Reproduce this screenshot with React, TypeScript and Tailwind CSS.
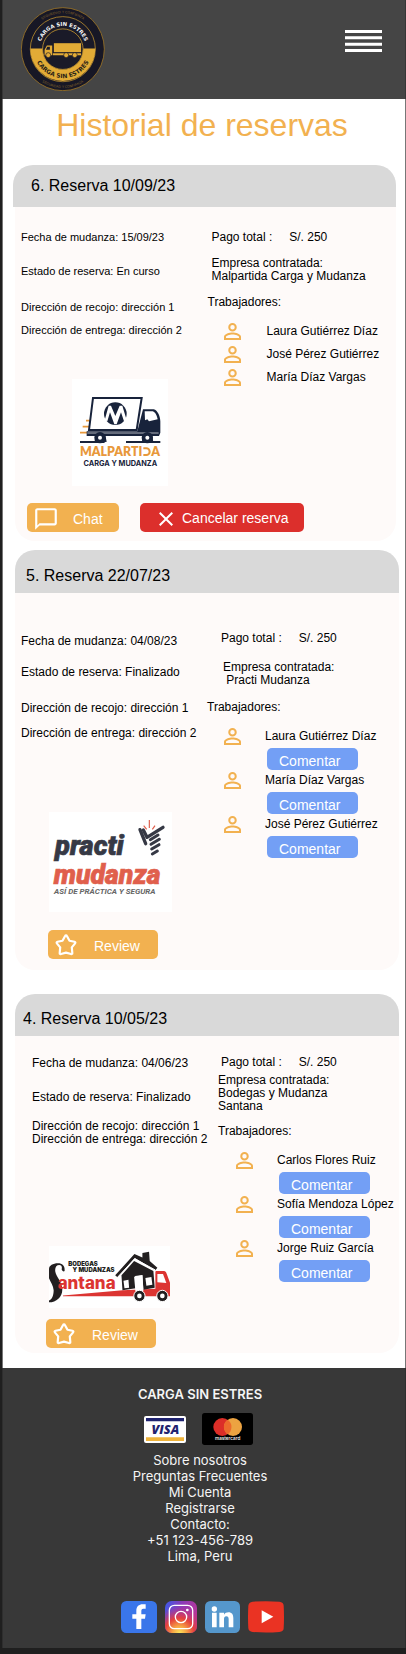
import type { ReactNode } from "react";
import { MdChatBubbleOutline, MdClose } from "react-icons/md";

function BrandLogo() {
  return (
    <svg viewBox="62 20 253 253" className="size-[84px]" role="img" aria-label="Carga sin estres">
      <defs>
        <path id="arc-top" d="M118 147a70 70 0 0 1 140 0" />
        <path id="arc-bottom" d="M101 147a87 87 0 0 0 174 0" />
        <path id="rim-top" d="M80 147a108 108 0 0 1 216 0" />
        <path id="rim-bottom" d="M71 147a117 117 0 0 0 234 0" />
      </defs>
      <circle cx="188" cy="147" r="125" fill="#171725" stroke="#9c7425" strokeWidth="2.5" />
      <circle cx="188" cy="147" r="98" fill="#1a1a28" stroke="#b58a2e" strokeWidth="2.5" />
      <path d="M90 145h196a98 98 0 0 1-196 0z" fill="#e2ab36" />
      <circle cx="188" cy="147" r="61" fill="#1a1a28" stroke="#c0922f" strokeWidth="2.5" />
      <g fontFamily="DejaVu Sans, sans-serif" textAnchor="middle">
        <text fontSize="16" fontWeight="700" fill="#f4f4f4">
          <textPath href="#arc-top" startOffset="50%">CARGA SIN ESTRES</textPath>
        </text>
        <text fontSize="18" fontWeight="700" fill="#2a2418">
          <textPath href="#arc-bottom" startOffset="50%">CARGA SIN ESTRES</textPath>
        </text>
        <text fontSize="10" fill="#80602a">
          <textPath href="#rim-top" startOffset="50%">SEGURIDAD Y CONFIANZA</textPath>
        </text>
        <text fontSize="10" fill="#80602a">
          <textPath href="#rim-bottom" startOffset="50%">SEGURIDAD Y CONFIANZA</textPath>
        </text>
      </g>
      <g fill="#e2ab36">
        <path d="M161 129h82v27h-82z" />
        <path d="M140 136h16v29h-23v-16zM158 159h85v6h-85z" />
        <path d="M141 140h8v9h-12z" fill="#1a1a28" />
        <g stroke="#1a1a28" strokeWidth="2">
          <circle cx="144" cy="165" r="7.500" />
          <circle cx="198" cy="165" r="7.500" />
          <circle cx="224" cy="165" r="7.500" />
        </g>
      </g>
    </svg>
  );
}

function MalpartidaLogo() {
  return (
    <svg viewBox="6 -18 288 321" className="h-[107px] w-24" role="img" aria-label="Malpartida Carga y Mudanza">
      <path d="M6-18h288v321H6z" fill="#fff" />
      <path d="M48 107h12M38 125h20M30 143h24" stroke="#e8983a" strokeWidth="5" />
      <path d="M69 39h146l-15 96H57z" fill="#fff" stroke="#18233b" strokeWidth="6" />
      <path d="M219 73h32c12 3 20 21 20 36v34l-4 10H50v-14h152z" fill="#18233b" />
      <path d="M224 79h24c9 3 13 14 15 24l-26 6-5-6-7 3z" fill="#fff" />
      <path d="M52 144h214" stroke="#fff" strokeWidth="2" />
      <path d="M30 168h80l-8 6H30zM168 168h103v6H168z" fill="#18233b" />
      <path d="M76 150h30l4 20H74zM218 150h28l4 20h-34z" fill="#18233b" />
      <circle cx="90" cy="158" r="17" fill="#18233b" />
      <circle cx="90" cy="158" r="6" fill="#fff" />
      <circle cx="232" cy="158" r="17" fill="#18233b" />
      <circle cx="232" cy="158" r="6" fill="#fff" />
      <circle cx="136" cy="86" r="34" fill="#18233b" />
      <path d="M104 106l12-44h7l13 31 13-31h8l13 43-8 4-9-27-13 36h-7l-13-36-8 27z" fill="#fff" />
      <text x="217" y="213" textAnchor="end" fontFamily="Lato, sans-serif" fontSize="37" fontWeight="800" fill="#e8983a">MALPARTI</text>
      <path d="M220 190h9a10 10 0 0 1 0 20h-9" fill="none" stroke="#e8983a" strokeWidth="6" />
      <text x="244" y="213" fontFamily="Lato, sans-serif" fontSize="37" fontWeight="800" fill="#e8983a">A</text>
      <text x="151" y="242" textAnchor="middle" fontFamily="Inter, sans-serif" fontSize="22" fontWeight="700" fill="#18233b">CARGA Y MUDANZA</text>
    </svg>
  );
}

function PractiLogo() {
  return (
    <svg viewBox="148 66 369 300" className="h-[100px] w-[123px]" role="img" aria-label="Practi Mudanza">
      <path d="M148 66h369v300H148z" fill="#fff" />
      <g fontFamily="Roboto, sans-serif" fontStyle="italic">
        <text x="166" y="194" fontSize="82" fontWeight="900" fill="#363945" stroke="#363945" strokeWidth="2">practi</text>
        <text x="162" y="281" fontSize="80" fontWeight="900" fill="#e05f4c" stroke="#e05f4c" strokeWidth="2">mudanza</text>
        <text x="163" y="312" fontSize="24" fontWeight="700" fill="#666">ASÍ DE PRÁCTICA Y SEGURA</text>
      </g>
      <g stroke="#363945" strokeLinecap="round" fill="none">
        <path d="M421 119l17 42" strokeWidth="10" />
        <path d="M431 120l11 22M442 142l48-30" strokeWidth="10" />
        <path d="M452 149l23-14M454 163l25-15M456 177l22-13M458 192l15-9" strokeWidth="9" />
      </g>
      <path d="M449 90v24M432 107l9 11M466 107l-8 11" stroke="#e05f4c" strokeWidth="3.500" />
    </svg>
  );
}

function SantanaLogo() {
  return (
    <svg viewBox="148 290 364 186" className="h-[62px] w-[121px]" role="img" aria-label="Bodegas y Mudanzas Santana">
      <path d="M148 290h364v186H148z" fill="#fff" />
      <path d="M195 364c1-13-6-22-20-22-15 0-27 7-27 17v28c5 12 13 22 14 36 0 15-5 28-14 31v5c22 0 40-16 40-38 0-24-18-38-21-54-2-12 3-20 12-20 7 0 9 6 7 13 1 6 8 8 9 4z" fill="#221f20" />
      <g fontFamily="Inter, sans-serif" fontWeight="900" fill="#221f20" fontSize="18">
        <text x="206" y="351">BODEGAS</text>
        <text x="219" y="368">Y MUDANZAS</text>
      </g>
      <path d="M190 439l180-16 98-5v-50c0-2 2-3 4-3h22c4 0 6 3 8 8l10 27v41H190z" fill="#dc3532" />
      <path d="M474 374h17l10 27-27-2z" fill="#fff" />
      <text x="174" y="418" fontFamily="Inter, sans-serif" fontSize="51" fontWeight="800" fill="#dc3532">antana</text>
      <path d="M347 378l58-64 24 10v-13l20-4 2 28 23 20-6 8-62-37-52 58z" fill="#221f20" />
      <path d="M366 378l38-43 58 30 4 50-34 6-3-44-22 3 2 37-40 6z" fill="#221f20" />
      <path d="M354 384l52-56 62 34" fill="none" stroke="#fff" strokeWidth="3" />
      <path d="M372 394l15-3 2 24-14 2zM438 386l18-3 3 23-18 3zM404 382l25-4 3 48-24 1z" fill="#fff" />
      <g fill="#221f20" stroke="#fff" strokeWidth="3">
        <circle cx="420" cy="440" r="17" />
        <circle cx="489" cy="440" r="17" />
      </g>
      <g fill="#fff">
        <circle cx="420" cy="440" r="7" />
        <circle cx="489" cy="440" r="7" />
      </g>
    </svg>
  );
}

function PersonIcon() {
  return (
    <svg viewBox="4 4 16 16" className="size-[17px] shrink-0" fill="#f2b150" aria-hidden="true">
      <path d="M12 5.900a2.100 2.100 0 1 1 0 4.200 2.100 2.100 0 0 1 0-4.200m0 9c2.970 0 6.100 1.460 6.100 2.100v1.100H5.900V17c0-.640 3.130-2.100 6.100-2.100M12 4C9.790 4 8 5.790 8 8s1.790 4 4 4 4-1.790 4-4-1.790-4-4-4m0 9c-2.670 0-8 1.340-8 4v3h16v-3c0-2.660-5.330-4-8-4" />
    </svg>
  );
}

function StarIcon() {
  return (
    <svg viewBox="0 0 24 24" className="size-6 shrink-0" fill="none" stroke="#fff" strokeWidth="2.2" strokeLinejoin="round" aria-hidden="true">
      <path d="M11.100 3a1 1 0 0 1 1.800 0l2.600 4.700 5 1.100c.9.200 1.100 1 .6 1.600l-3.300 4 .5 5.600c.1.900-.6 1.300-1.300 1L12 19.600l-5 1.400c-.8.300-1.400-.1-1.300-1l.5-5.600-3.300-4c-.5-.6-.3-1.400.6-1.600l5-1.100z" />
    </svg>
  );
}

function Worker({ name }: { name: string }) {
  return (
    <li className="flex h-[23px] items-start gap-[26px]">
      <PersonIcon />
      <span className="pt-0.5 whitespace-nowrap">{name}</span>
    </li>
  );
}

function RatedWorker({ name }: { name: string }) {
  return (
    <li className="flex items-start gap-6">
      <PersonIcon />
      <div className="flex flex-col items-start gap-[5px] pt-0.5">
        <span className="whitespace-nowrap">{name}</span>
        <button type="button" className="ml-0.5 h-[22px] w-[91px] rounded-[5px] bg-[#739ff5] pt-[3px] pl-3 text-left text-sm leading-[18px] text-white">
          Comentar
        </button>
      </div>
    </li>
  );
}

function ReviewButton() {
  return (
    <button type="button" className="flex h-[29px] w-[110px] items-center gap-4 rounded-[5px] bg-[#f2b150] pl-1.5 text-sm text-white">
      <StarIcon />
      <span className="pt-0.5">Review</span>
    </button>
  );
}

function Total() {
  return (
    <p className="flex gap-[17px]">
      <span>Pago total :</span>
      <span>S/. 250</span>
    </p>
  );
}

function Card({ title, headClass, children }: { title: string; headClass: string; children: ReactNode }) {
  return (
    <section>
      <h2 className={"rounded-t-[20px] bg-[#d9d9d9] text-base leading-6 text-black " + headClass}>{title}</h2>
      {children}
    </section>
  );
}

function Socials() {
  return (
    <nav aria-label="Redes sociales" className="flex justify-center gap-2 pr-1">
      <a href="#facebook" aria-label="Facebook">
        <svg viewBox="0 0 108 96" className="h-8 w-9">
          <rect width="108" height="96" rx="16" fill="#3a76ea" />
          <path d="M46 84V53H34V40h12V30c0-14 8-20 19-20h9v13h-7c-5 0-6 3-6 7v10h13l-2 13H61v31z" fill="#fff" />
        </svg>
      </a>
      <a href="#instagram" aria-label="Instagram">
        <svg viewBox="0 0 96 96" className="size-8">
          <defs>
            <linearGradient id="ig-base" x1="0" y1="0" x2="1" y2="0.300">
              <stop offset="0" stopColor="#3b5bea" />
              <stop offset="0.500" stopColor="#8a3bb8" />
              <stop offset="1" stopColor="#b5379c" />
            </linearGradient>
            <radialGradient id="ig-glow" cx="0.450" cy="1" r="0.850">
              <stop offset="0" stopColor="#fbe55c" />
              <stop offset="0.250" stopColor="#f6a545" />
              <stop offset="0.550" stopColor="#e5403c" />
              <stop offset="1" stopColor="#c5308c" stopOpacity="0" />
            </radialGradient>
          </defs>
          <rect width="96" height="96" rx="20" fill="url(#ig-base)" />
          <rect width="96" height="96" rx="20" fill="url(#ig-glow)" />
          <g fill="none" stroke="#fff" strokeWidth="4">
            <rect x="13" y="13" width="70" height="70" rx="15" />
            <circle cx="48" cy="48" r="17" />
          </g>
          <circle cx="67" cy="27" r="4" fill="#fff" />
        </svg>
      </a>
      <a href="#linkedin" aria-label="LinkedIn">
        <svg viewBox="0 0 105 96" className="h-8 w-[35px]">
          <rect width="105" height="96" rx="16" fill="#5597cc" />
          <circle cx="28" cy="24" r="8" fill="#fff" />
          <path d="M21 35h14v44H21zM43 35h14v6c3-5 8-7 13-7 11 0 15 7 15 18v27H71V55c0-6-2-9-7-9s-7 4-7 9v24H43z" fill="#fff" />
        </svg>
      </a>
      <a href="#youtube" aria-label="YouTube">
        <svg viewBox="0 0 108 96" className="h-8 w-9">
          <path d="M14 2q40-3 80 0 13 1 13 12 2 34 0 68 0 10-13 11-40 3-80 0-12-1-13-11-2-34 0-68Q2 3 14 2z" fill="#ea3323" />
          <path d="M41 28l35 19-35 20z" fill="#fff" />
        </svg>
      </a>
    </nav>
  );
}

export default function App() {
  return (
    <div className="border-b-[6px] border-l-2 border-[#1f1f1f] bg-white font-['Liberation_Sans',Arial,sans-serif] text-xs leading-[13px] text-black">
      <header className="flex h-[99px] items-start justify-between border-x border-[#363636] bg-[#454545] pt-[7px] pr-[23px] pl-[18px]">
        <BrandLogo />
        <button type="button" aria-label="Menú" className="mt-[23px]">
          <svg viewBox="0 0 37 22" className="h-[22px] w-[37px]" fill="#fff">
            <path d="M0 0h37v3H0zM0 6.300h37v3H0zM0 12.700h37v3H0zM0 19h37v3H0z" />
          </svg>
        </button>
      </header>

      <main className="border-x border-[#777] pt-2 pb-[15px]">
        <h1 className="pr-1 text-center text-[32px] leading-9 text-[#f2b150]">Historial de reservas</h1>

        <div className="mt-[22px] mr-[9px] ml-2.5">
          <Card title="6. Reserva 10/09/23" headClass="pt-[9px] pb-[9px] pl-[18px]">
            <div className="ml-0.5 rounded-b-[20px] bg-[#fefaf9] pt-6 pb-[9px]">
              <div className="grid grid-cols-2">
                <div className="pl-1.5 text-[11px]">
                  <p>Fecha de mudanza: 15/09/23</p>
                  <p className="mt-[21px]">Estado de reserva: En curso</p>
                  <p className="mt-[23px]">Dirección de recojo: dirección 1</p>
                  <p className="mt-2.5">Dirección de entrega: dirección 2</p>
                  <div className="mt-[42px] ml-[51px]">
                    <MalpartidaLogo />
                  </div>
                </div>
                <div className="pl-0.5">
                  <div className="pl-1">
                    <Total />
                    <p className="mt-[13px]">
                      Empresa contratada:
                      <br />
                      <span className="whitespace-nowrap">Malpartida Carga y Mudanza</span>
                    </p>
                  </div>
                  <h3 className="mt-[13px]">Trabajadores:</h3>
                  <ul className="mt-3.5 pl-4">
                    <Worker name="Laura Gutiérrez Díaz" />
                    <Worker name="José Pérez Gutiérrez" />
                    <Worker name="María Díaz Vargas" />
                  </ul>
                </div>
              </div>
              <div className="mt-[17px] flex gap-[21px] pl-3">
                <button type="button" className="flex h-[29px] w-[92px] items-center gap-3.5 rounded-[5px] bg-[#f2b150] pl-1.5 text-sm text-white">
                  <MdChatBubbleOutline className="mt-0.5 size-[26px]" />
                  <span className="pt-0.5">Chat</span>
                </button>
                <button type="button" className="flex h-[29px] w-[164px] items-center gap-1 rounded-[5px] bg-[#dc2f2c] pl-3.5 text-sm text-white">
                  <MdClose className="mt-0.5 size-6" />
                  <span className="whitespace-nowrap">Cancelar reserva</span>
                </button>
              </div>
            </div>
          </Card>
        </div>

        <div className="mt-[9px] mr-1.5 ml-3">
          <Card title="5. Reserva 22/07/23" headClass="pt-3.5 pb-[5px] pl-[11px]">
            <div className="grid grid-cols-2 rounded-b-[20px] bg-[#fefaf9] pb-[11px]">
              <div className="pt-[42px] pl-1.5">
                <p>Fecha de mudanza: 04/08/23</p>
                <p className="mt-[18px]">Estado de reserva: Finalizado</p>
                <p className="mt-[23px]">Dirección de recojo: dirección 1</p>
                <p className="mt-3 whitespace-nowrap">Dirección de entrega: dirección 2</p>
                <div className="mt-[72px] ml-7">
                  <PractiLogo />
                </div>
                <div className="mt-[18px] ml-[27px]">
                  <ReviewButton />
                </div>
              </div>
              <div className="pt-[39px]">
                <div className="pl-3.5">
                  <Total />
                  <p className="mt-4 pl-0.5">
                    Empresa contratada:
                    <br />
                    &nbsp;Practi Mudanza
                  </p>
                </div>
                <h3 className="mt-3.5">Trabajadores:</h3>
                <ul className="mt-3.5 flex flex-col gap-0.5 pl-[17px]">
                  <RatedWorker name="Laura Gutiérrez Díaz" />
                  <RatedWorker name="María Díaz Vargas" />
                  <RatedWorker name="José Pérez Gutiérrez" />
                </ul>
              </div>
            </div>
          </Card>
        </div>

        <div className="mt-6 mr-1.5 ml-3">
          <Card title="4. Reserva 10/05/23" headClass="pt-[13px] pb-[5px] pl-2">
            <div className="grid grid-cols-2 rounded-b-[20px] bg-[#fefaf9] pb-[5px]">
              <div className="pt-[21px] pl-[17px]">
                <p>Fecha de mudanza: 04/06/23</p>
                <p className="mt-[21px]">Estado de reserva: Finalizado</p>
                <p className="mt-4 whitespace-nowrap">
                  Dirección de recojo: dirección 1
                  <br />
                  Dirección de entrega: dirección 2
                </p>
                <div className="mt-[100px] ml-[17px]">
                  <SantanaLogo />
                </div>
                <div className="mt-[11px] ml-3.5">
                  <ReviewButton />
                </div>
              </div>
              <div className="pt-5 pl-[11px]">
                <div className="pl-[3px]">
                  <Total />
                </div>
                <p className="mt-[5px]">
                  Empresa contratada:
                  <br />
                  Bodegas y Mudanza
                  <br />
                  Santana
                </p>
                <h3 className="mt-3">Trabajadores:</h3>
                <ul className="mt-3.5 flex flex-col gap-0.5 pl-[18px]">
                  <RatedWorker name="Carlos Flores Ruiz" />
                  <RatedWorker name="Sofía Mendoza López" />
                  <RatedWorker name="Jorge Ruiz García" />
                </ul>
              </div>
            </div>
          </Card>
        </div>
      </main>

      <footer className="border-x border-[#2e2e2e] bg-[#383838] pt-4 pb-[15px] font-[Inter,sans-serif] text-[13px] leading-4 text-[#f5f5f5]">
        <div className="pr-2 text-center">
          <h2 className="leading-5 font-semibold">CARGA SIN ESTRES</h2>
          <div className="mt-[9px] flex items-center justify-center gap-4 pr-[3px]">
            <svg viewBox="0 0 126 81" className="h-[27px] w-[42px]" role="img" aria-label="Visa">
              <rect width="126" height="81" rx="6" fill="#fff" />
              <path d="M6 6h114v10H6z" fill="#1f2370" />
              <path d="M6 64h114v11H6z" fill="#efb43c" />
              <text x="64" y="54" textAnchor="middle" fontFamily="Open Sans, sans-serif" fontStyle="italic" fontWeight="800" fontSize="38" fill="#1f2370">VISA</text>
            </svg>
            <svg viewBox="0 0 153 96" className="h-8 w-[51px]" role="img" aria-label="Mastercard">
              <rect width="153" height="96" rx="8" fill="#000" />
              <circle cx="61" cy="42" r="27" fill="#dc2e28" />
              <circle cx="93" cy="42" r="27" fill="#eca341" />
              <path d="M77 20a27 27 0 0 1 0 44a27 27 0 0 1 0-44z" fill="#ec6a2c" />
              <text x="77" y="81" textAnchor="middle" fontFamily="Inter, sans-serif" fontWeight="500" fontSize="14" fill="#fff">mastercard</text>
            </svg>
          </div>
          <ul className="mt-[7px]">
            <li><a href="#nosotros">Sobre nosotros</a></li>
            <li><a href="#preguntas">Preguntas Frecuentes</a></li>
            <li><a href="#cuenta">Mi Cuenta</a></li>
            <li><a href="#registro">Registrarse</a></li>
            <li>Contacto:</li>
            <li>+51 123-456-789</li>
            <li>Lima, Peru</li>
          </ul>
        </div>
        <div className="mt-[37px]">
          <Socials />
        </div>
      </footer>
    </div>
  );
}
